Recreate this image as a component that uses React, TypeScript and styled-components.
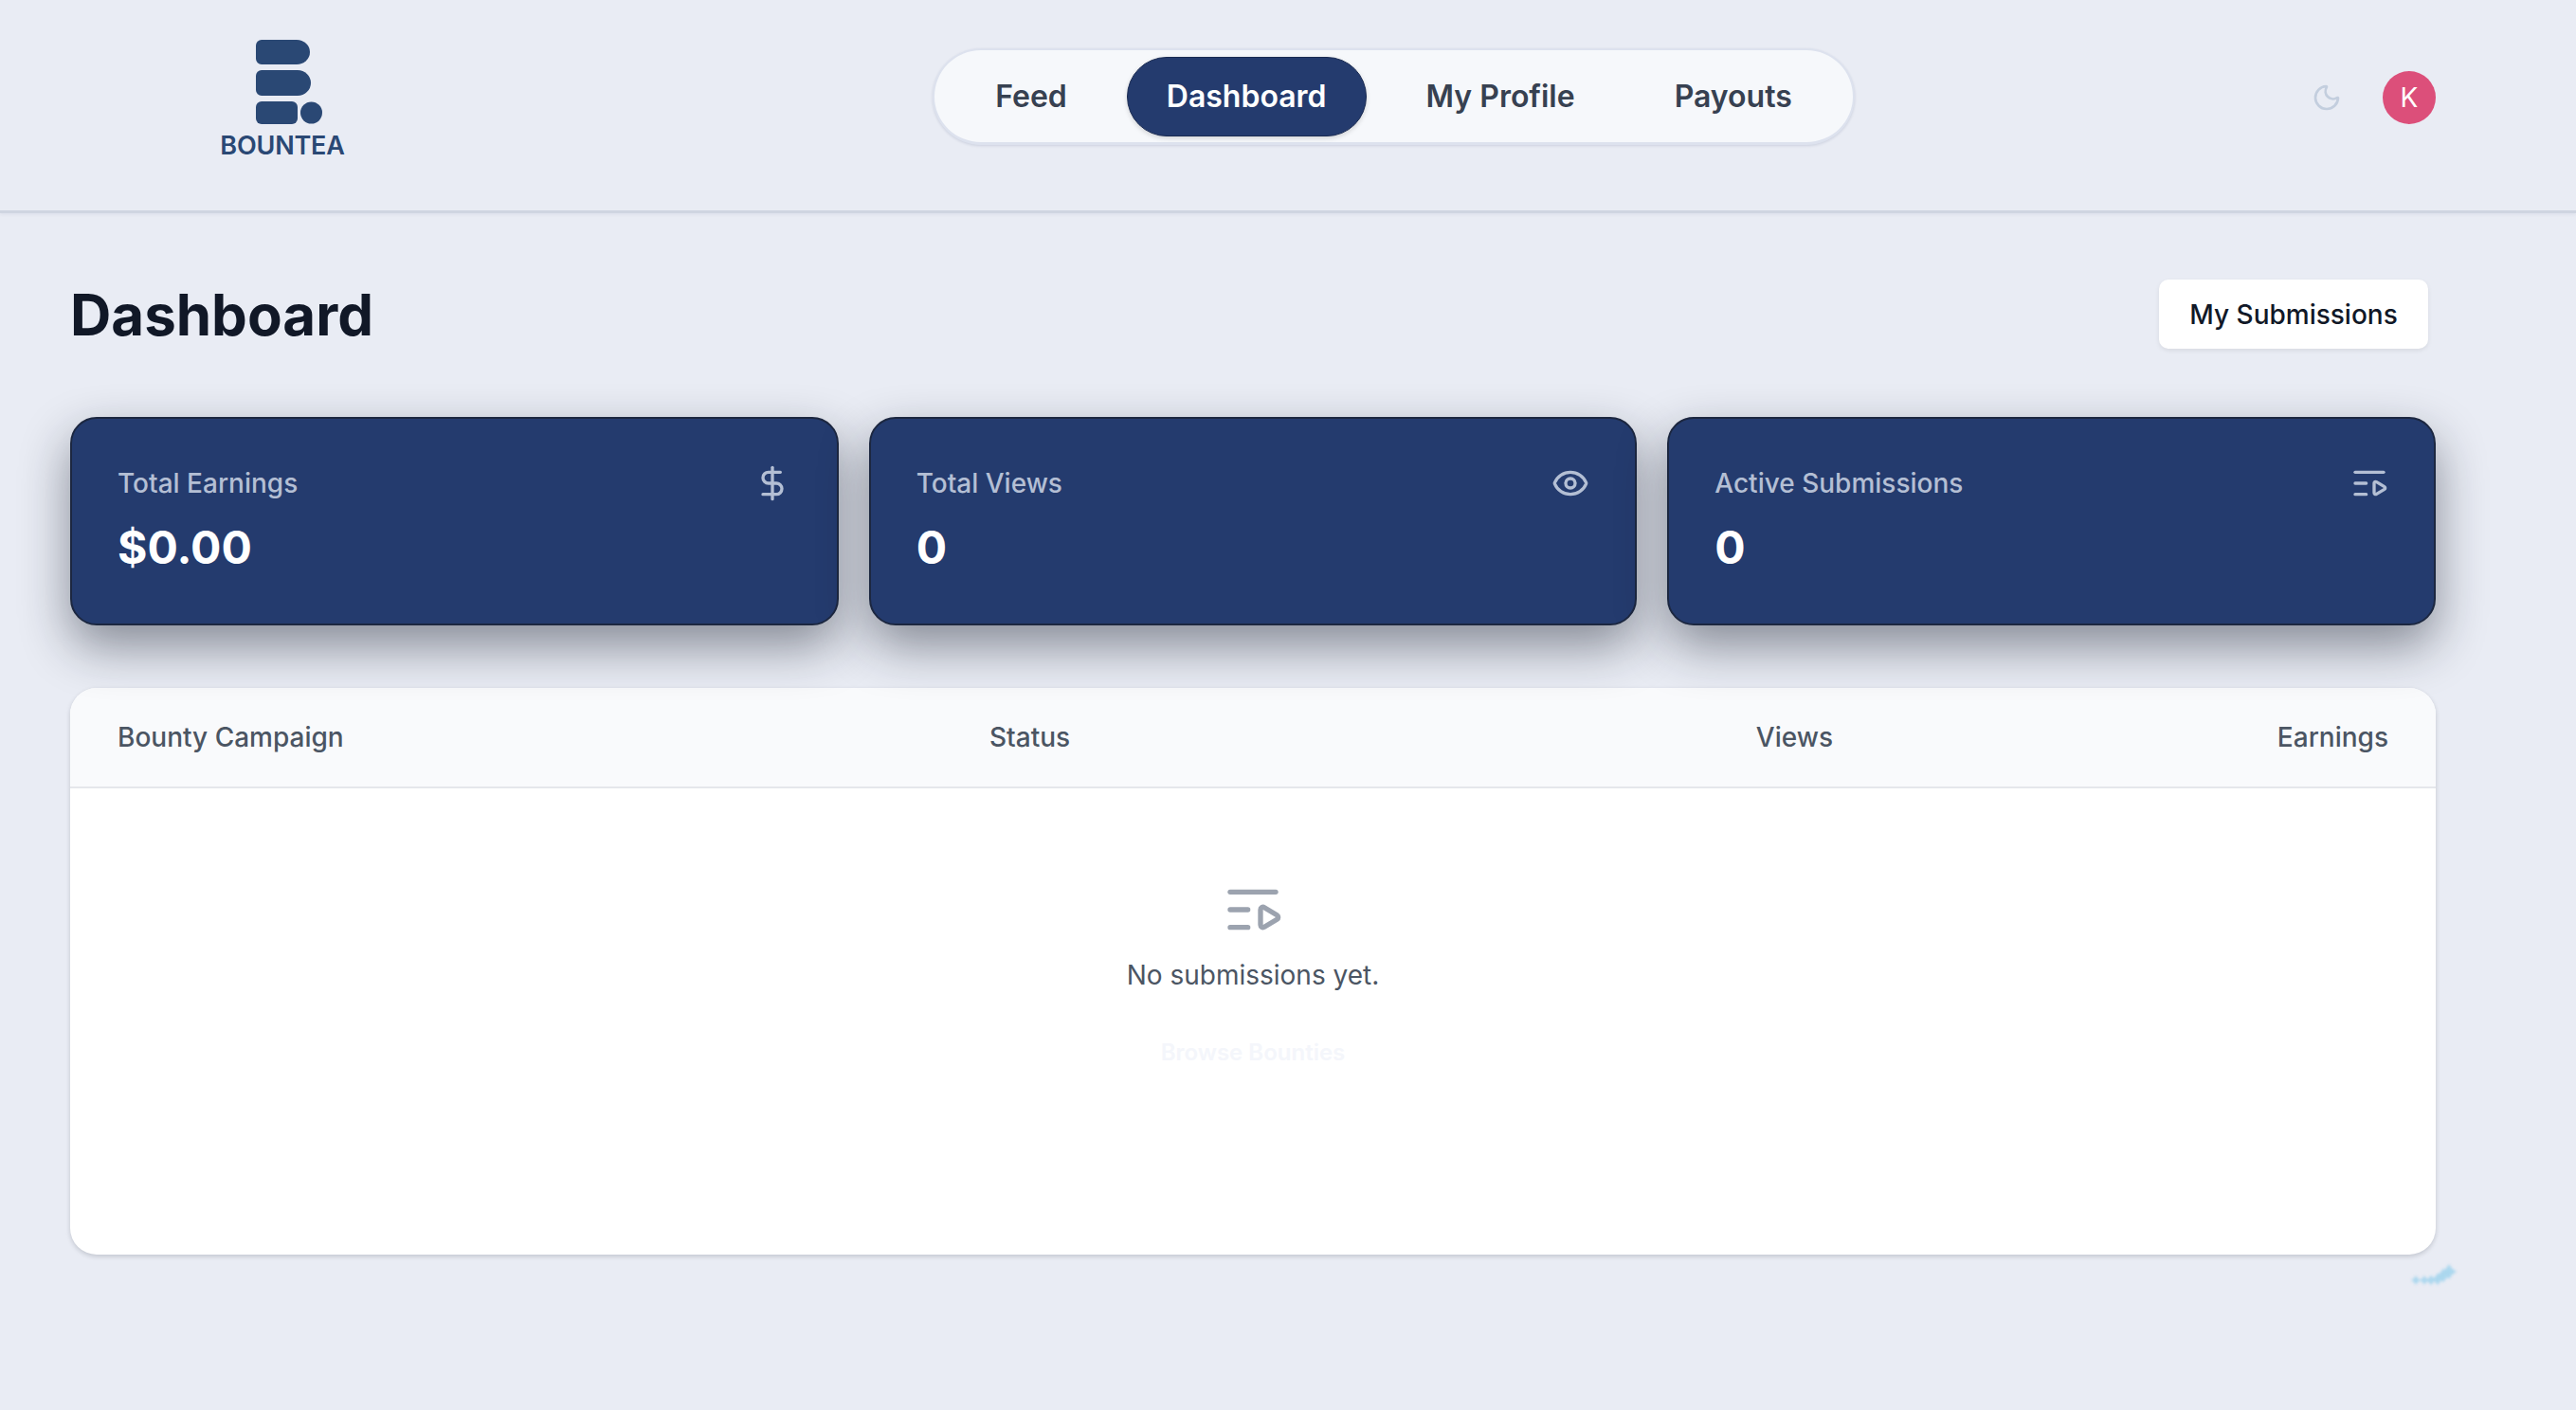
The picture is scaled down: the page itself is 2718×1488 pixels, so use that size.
import React from "react";
import styled, { createGlobalStyle } from "styled-components";
import { DollarSign, Eye, ListVideo, Moon } from "lucide-react";

const Global = createGlobalStyle`
  html, body { margin: 0; padding: 0; background: #e9ecf4; }
  body { font-family: Inter, "Noto Sans", sans-serif; }
  * { box-sizing: border-box; }
`;

const Page = styled.div`
  position: relative;
  min-height: 1488px;
  background: #e9ecf4;
  overflow: hidden;
`;

const Header = styled.header`
  height: 225px;
  border-bottom: 3px solid #cfd5e1;
  box-shadow: 0 2px 3px rgba(30, 45, 90, 0.05);
  padding: 0 148px 0 74px;
  display: flex;
  align-items: center;
  justify-content: space-between;
`;

const Brand = styled.div`
  width: 448px;
  display: flex;
  flex-direction: column;
  align-items: center;
  gap: 6px;
  margin-top: -12px;
`;

const BrandName = styled.span`
  font-size: 27px;
  line-height: 30px;
  font-weight: 600;
  color: #2a4874;
  letter-spacing: -0.2px;
`;

const Nav = styled.nav`
  height: 102px;
  margin-top: -18px;
  padding: 0 22px;
  display: flex;
  align-items: center;
  gap: 21px;
  background: #f6f8fb;
  border: 2px solid #dde2ee;
  border-bottom-width: 3px;
  border-radius: 51px;
  box-shadow: 0 1px 3px rgba(30, 45, 90, 0.14);
`;

const NavItem = styled.a<{ $active?: boolean }>`
  height: 84px;
  padding: 0 ${(p) => (p.$active ? "41px" : "42px")};
  display: flex;
  align-items: center;
  font-size: 32px;
  font-weight: 600;
  color: ${(p) => (p.$active ? "#ffffff" : "#374151")};
  ${(p) =>
    p.$active &&
    `
    background: #243b6e;
    border: 1.5px solid #1a2b52;
    border-radius: 42px;
    box-shadow: 0 2px 5px rgba(0, 0, 0, 0.15);
  `}
`;

const Tools = styled.div`
  width: 151px;
  margin-top: -16px;
  display: flex;
  align-items: center;
  justify-content: flex-end;
  gap: 43px;
  color: #c3cede;
`;

const Avatar = styled.div`
  width: 56px;
  height: 56px;
  border-radius: 50%;
  background: #dc4f7a;
  color: #ffffff;
  font-size: 28px;
  font-weight: 400;
  display: flex;
  align-items: center;
  justify-content: center;
`;

const Main = styled.main`
  padding: 70px 148px 0 74px;
`;

const TitleRow = styled.div`
  height: 73px;
  display: flex;
  align-items: center;
  justify-content: space-between;
  padding-right: 8px;
  margin-bottom: 72px;
`;

const Title = styled.h1`
  margin: 0;
  font-size: 60px;
  font-weight: 700;
  color: #111827;
`;

const PlainButton = styled.button`
  width: 284px;
  height: 73px;
  border: none;
  border-radius: 10px;
  background: #ffffff;
  color: #111827;
  font-family: inherit;
  font-size: 28px;
  font-weight: 500;
  box-shadow: 0 2px 5px rgba(0, 0, 0, 0.08);
`;

const Cards = styled.section`
  position: relative;
  z-index: 1;
  display: grid;
  grid-template-columns: repeat(3, 1fr);
  gap: 32px;
  margin-bottom: 66px;
`;

const Card = styled.article`
  height: 220px;
  padding: 48px 48px;
  background: #243b6e;
  border: 2px solid #1c2740;
  border-radius: 28px;
  box-shadow: 0 22px 52px rgba(17, 24, 39, 0.46);
`;

const CardTop = styled.div`
  display: flex;
  align-items: center;
  justify-content: space-between;
  color: #b4bfd4;
`;

const CardLabel = styled.span`
  font-size: 28px;
  font-weight: 500;
`;

const CardValue = styled.div`
  margin-top: 16px;
  font-size: 48px;
  line-height: 64px;
  font-weight: 700;
  color: #ffffff;
`;

const TablePanel = styled.section`
  height: 598px;
  background: #ffffff;
  border-radius: 28px;
  box-shadow: 0 2px 5px rgba(17, 24, 39, 0.18);
  overflow: hidden;
`;

const TableHead = styled.div`
  height: 106px;
  padding: 0 50px;
  display: grid;
  grid-template-columns: 920px 460px 430px 1fr;
  align-items: center;
  background: #f9fafc;
  border-bottom: 2px solid #e5e7eb;
`;

const HeadCell = styled.span<{ $right?: boolean }>`
  font-size: 28px;
  font-weight: 500;
  color: #4b5563;
  text-align: ${(p) => (p.$right ? "right" : "left")};
`;

const Empty = styled.div`
  padding-top: 96px;
  display: flex;
  flex-direction: column;
  align-items: center;
  color: #9ca3af;
`;

const EmptyText = styled.p`
  margin: 15px 0 0;
  font-size: 28px;
  line-height: 44px;
  color: #4b5563;
`;

const GhostLink = styled.span`
  margin-top: 45px;
  font-size: 24px;
  font-weight: 600;
  color: #f4f6fb;
`;

const Trail = styled.svg`
  position: absolute;
  left: 2538px;
  top: 1330px;
  filter: blur(1.5px);
  opacity: 0.9;
`;

const stats = [
  { label: "Total Earnings", value: "$0.00", Icon: DollarSign },
  { label: "Total Views", value: "0", Icon: Eye },
  { label: "Active Submissions", value: "0", Icon: ListVideo },
];

const star = (x: number, y: number, r: number) =>
  `M${x} ${y - r}L${x + r * 0.4} ${y - r * 0.4}L${x + r} ${y}L${x + r * 0.4} ${y + r * 0.4}L${x} ${y + r}L${x - r * 0.4} ${y + r * 0.4}L${x - r} ${y}L${x - r * 0.4} ${y - r * 0.4}Z`;

export default function App() {
  return (
    <Page>
      <Global />
      <Header>
        <Brand>
          <svg width="84" height="92" viewBox="256 40 84 92" aria-hidden="true">
            <path d="M276 41h37a14 13 0 0 1 0 26h-37a6 6 0 0 1-6-6v-14a6 6 0 0 1 6-6Z" fill="#2a4874" />
            <path d="M276 73h38a14 13.500 0 0 1 0 27h-38a6 6 0 0 1-6-6v-15a6 6 0 0 1 6-6Z" fill="#2a4874" />
            <path d="M276 106h32a6 6 0 0 1 6 6v12a6 6 0 0 1-6 6h-32a6 6 0 0 1-6-6v-12a6 6 0 0 1 6-6Z" fill="#2a4874" />
            <circle cx="328.500" cy="118" r="11.500" fill="#2a4874" />
          </svg>
          <BrandName>BOUNTEA</BrandName>
        </Brand>
        <Nav>
          <NavItem>Feed</NavItem>
          <NavItem $active>Dashboard</NavItem>
          <NavItem>My Profile</NavItem>
          <NavItem>Payouts</NavItem>
        </Nav>
        <Tools>
          <Moon size={32} />
          <Avatar>K</Avatar>
        </Tools>
      </Header>
      <Main>
        <TitleRow>
          <Title>Dashboard</Title>
          <PlainButton>My Submissions</PlainButton>
        </TitleRow>
        <Cards>
          {stats.map(({ label, value, Icon }) => (
            <Card key={label}>
              <CardTop>
                <CardLabel>{label}</CardLabel>
                <Icon size={40} strokeWidth={2} />
              </CardTop>
              <CardValue>{value}</CardValue>
            </Card>
          ))}
        </Cards>
        <TablePanel>
          <TableHead>
            <HeadCell>Bounty Campaign</HeadCell>
            <HeadCell>Status</HeadCell>
            <HeadCell $right>Views</HeadCell>
            <HeadCell $right>Earnings</HeadCell>
          </TableHead>
          <Empty>
            <ListVideo size={64} />
            <EmptyText>No submissions yet.</EmptyText>
            <GhostLink>Browse Bounties</GhostLink>
          </Empty>
        </TablePanel>
      </Main>
      <Trail width="60" height="30" viewBox="0 0 60 30" aria-hidden="true">
        <path
          d={[star(11, 21, 5), star(20, 21, 5), star(27, 21, 5.500), star(34, 20, 6.500), star(40, 16, 7.500), star(46, 12, 8)].join("")}
          fill="#a5d5ee"
        />
      </Trail>
    </Page>
  );
}
